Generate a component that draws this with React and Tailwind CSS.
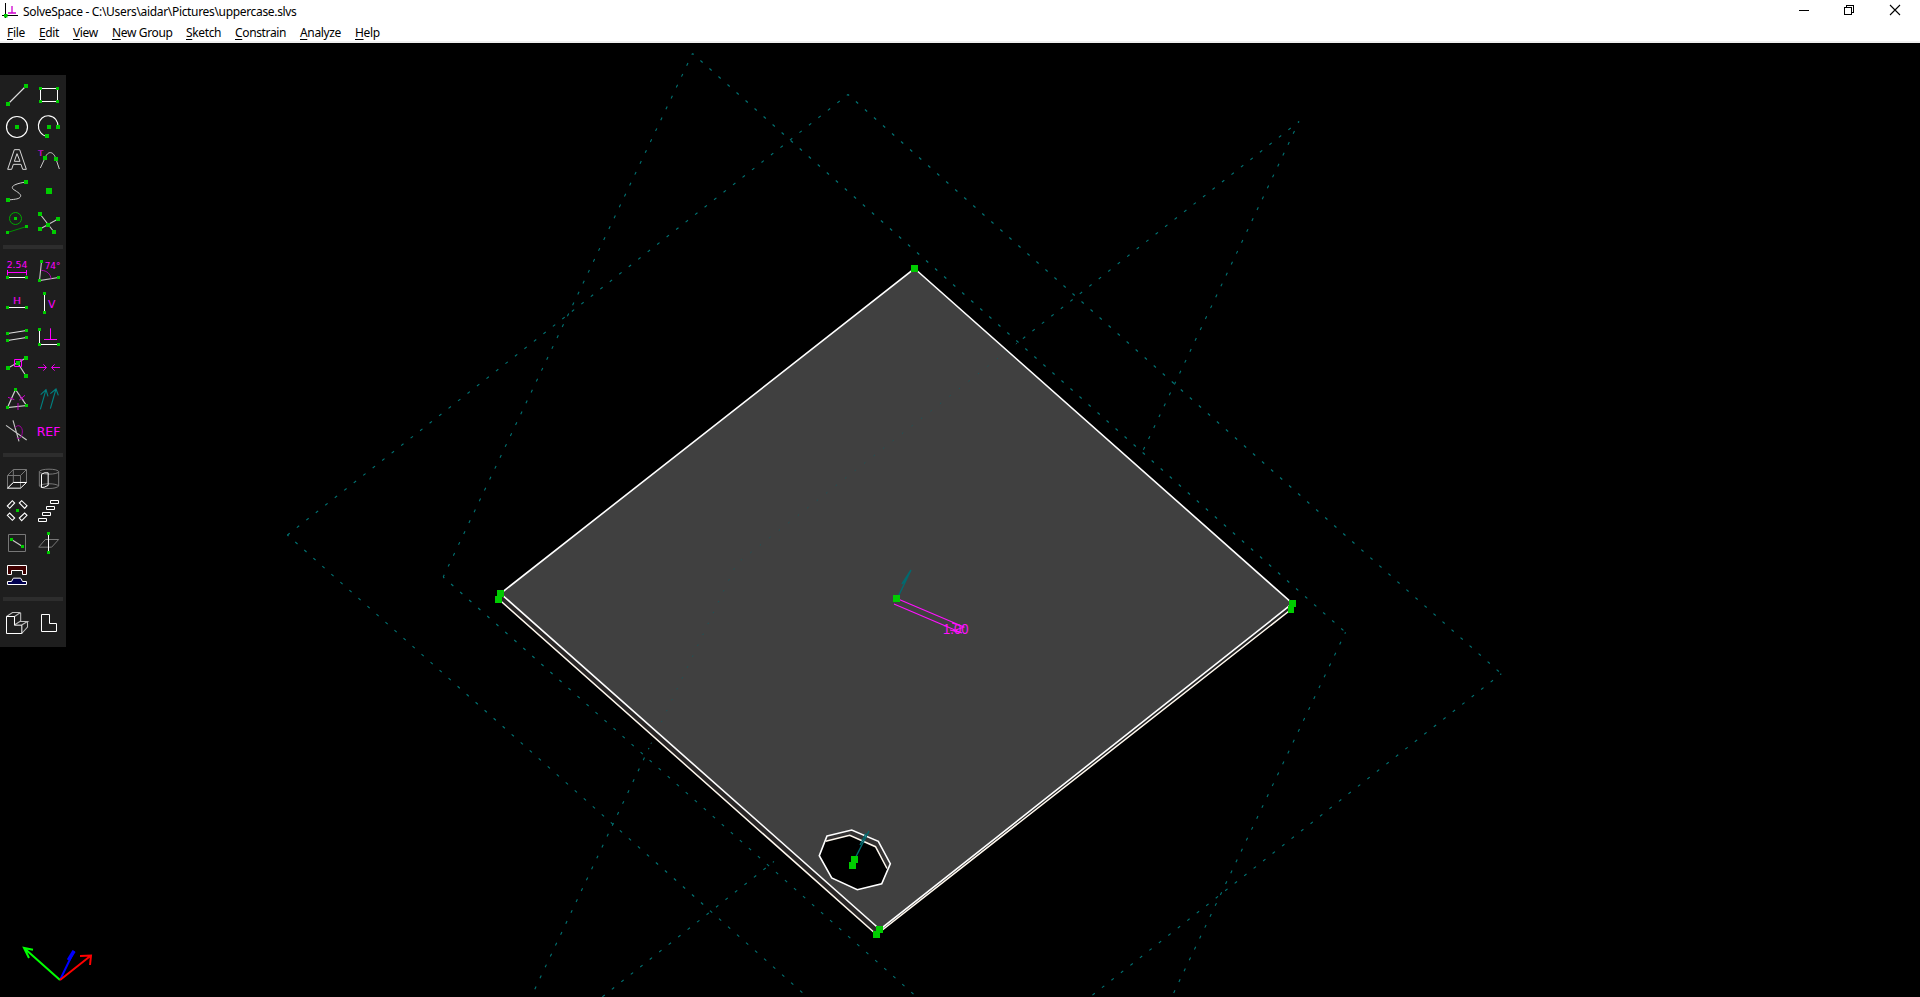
import React from "react";

const G = "#00cc00";
const M = "#ff00ff";
const W = "#ffffff";

// Square handle used for points, centred on (x, y)
function Dot({ x, y, s = 9, c = G }) {
  return <rect x={x - s / 2} y={y - s / 2} width={s} height={s} fill={c} shapeRendering="crispEdges" />;
}

function Line({ d, c = "#e0e0e0", w = 3.4, fill = "none" }) {
  return <path d={d} stroke={c} strokeWidth={w} fill={fill} />;
}

function Label({ x, y, size, len, children }) {
  return (
    <text x={x} y={y} fontSize={size} textLength={len} lengthAdjust="spacingAndGlyphs" fill={M} fontFamily="'DejaVu Sans', sans-serif">
      {children}
    </text>
  );
}

// Each tool: [viewBox, drawing]; the drawing grid is three units per pixel
const sketchTools = [
  ["3 15 96 96", <><Line d="M24 90L78 36" /><Dot x={24} y={90} s={12} /><Dot x={78} y={36} s={12} /></>],
  ["99 15 96 96", <><Line d="M121.500 43.500H172.500V82.500H121.500Z" c={W} w={3} /><Dot x={121.5} y={43.5} /><Dot x={172.5} y={43.5} /><Dot x={121.5} y={82.5} /><Dot x={172.5} y={82.5} /></>],
  ["3 111 96 96", <><circle cx="51" cy="159" r="31.500" fill="none" stroke="#fff" strokeWidth="3.500" /><Dot x={51} y={159} s={12} /></>],
  ["99 111 96 96", <><Line d="M174 159A29.500 31 0 1 0 141 187" w={3.5} c={W} /><Dot x={147} y={159} s={12} /><Dot x={174} y={159} s={12} /><Dot x={141} y={186} s={12} /></>],
  ["3 207 96 96", <Line c="#d8d8d8" w={3} d="M43 227H59L79 286H68L63 271H40L35 286H23ZM51 239L43 262H60Z" />],
  ["99 207 96 96", <><Line c="#c8c8c8" w={3} d="M121 282L135 252C143 230 160 230 168 255L178 285" /><Dot x={135} y={252} s={12} /><Dot x={168} y={255} s={12} /><Label x={114} y={246} size={23} len={16}>T</Label></>],
  ["3 303 96 96", <><Line d="M78 324C45 329 30 337 40 346C52 354 68 362 60 370C55 376 40 376 24 378" w={3} c="#d0d0d0" /><Dot x={78} y={324} s={12} /><Dot x={24} y={378} s={12} /></>],
  ["99 303 96 96", <Dot x={147} y={351} s={18} />],
  ["3 399 96 96", <><circle cx="46.500" cy="433.500" r="18" fill="none" stroke="#00aa00" strokeWidth="3" /><Line d="M22.500 475.500L79.500 457.500" c="#009000" w={3} /><Dot x={46.5} y={433.5} /><Dot x={22.5} y={475.5} /><Dot x={79.5} y={457.5} /></>],
  ["99 399 96 96", <><Line d="M120 420L162 474M120 465L174 435" c="#c8c8c8" /><Dot x={120} y={420} s={12} /><Dot x={174} y={435} s={12} /><Dot x={144} y={453} s={12} /><Dot x={120} y={465} s={12} /><Dot x={162} y={474} s={12} /></>],
];

const constrainTools = [
  ["3 45 96 96", <><Label x={20} y={84} size={28} len={62}>2.54</Label><Line d="M22.500 90V106M79.500 90V106M22.500 97.500H79.500" c={M} w={3} /><Line d="M22.500 112.500H79.500" c={W} w={3} /><Dot x={22.5} y={112.5} /><Dot x={79.5} y={112.5} /></>],
  ["99 45 96 96", <><Line d="M124.500 64.500L118.500 121.500L175.500 112.500" c="#c8c8c8" /><Line d="M124 91C141 92 152 102 153 117" c="#b000b0" w={3} /><Label x={134} y={87} size={27} len={47}>74°</Label><Dot x={124.5} y={64.5} /><Dot x={118.5} y={121.5} /><Dot x={175.5} y={112.5} /></>],
  ["3 141 96 96", <><Label x={39} y={192} size={27} len={24}>H</Label><Line d="M22.500 202.500H79.500" c={W} w={3} /><Dot x={22.5} y={202.5} /><Dot x={79.5} y={202.5} /></>],
  ["99 141 96 96", <><Line d="M133.500 160.500V217.500" c={W} w={3} /><Dot x={133.5} y={160.5} /><Dot x={133.5} y={217.5} /><Label x={144} y={203} size={34} len={22}>V</Label></>],
  ["3 237 96 96", <><Line d="M22.500 280.500L79.500 271.500M22.500 301.500L79.500 292.500" /><Dot x={22.5} y={280.5} /><Dot x={79.5} y={271.5} /><Dot x={22.5} y={301.5} /><Dot x={79.5} y={292.5} /></>],
  ["99 237 96 96", <><Line d="M118.500 268.500V313.500H175.500" c={W} w={3} /><Line d="M151.500 265V298.500M132 298.500H171" c={M} w={3} /><Dot x={118.5} y={268.5} /><Dot x={118.5} y={313.5} /><Dot x={175.5} y={313.5} /></>],
  ["3 333 96 96", <><Line d="M24 384L78 354M54 370L78 408" c="#c8c8c8" /><Dot x={24} y={384} s={12} /><Dot x={78} y={354} s={12} /><Dot x={78} y={408} s={12} /><Dot x={54} y={370} s={12} /><path d="M43.500 358.500H64.500V379.500H43.500Z" fill="none" stroke={M} strokeWidth="3" /></>],
  ["99 333 96 96", <Line d="M114 382.500H139M130 373L139.500 382.500L130 392M180 382.500H155M164 373L154.500 382.500L164 392" c="#e800e8" w={3} />],
  ["3 429 96 96", <><Line d="M46.500 448.500L22.500 502.500L79.500 496.500Z" c="#d0d0d0" w={3.6} /><Line d="M24 472L43 479M58 480L75 466M54 489V510M59 467L71 480" c="#c800c8" w={3} /><Dot x={46.5} y={448.5} /><Dot x={22.5} y={502.5} /><Dot x={79.5} y={496.5} /></>],
  ["99 429 96 96", <Line d="M121 508L138 449M122 464L138 449L144 469M151 506L168 447M151 461L168 447L175 466" c="#008080" w={3.4} />],
  ["3 525 96 96", <><Line d="M18 556L80 600M39 541L57 604" c="#c8c8c8" w={3.3} /><Line d="M45 563C55 550 68 560 67 576C66 592 58 599 50 594" c="#a000a0" w={3} /></>],
  ["99 525 96 96", <Label x={110} y={588} size={36} len={71}>REF</Label>],
];

const groupTools = [
  ["3 54 96 96", <><Line d="M22.500 130L40 112H79M40 112V73.500M22.500 91.500L40 73.500H79.500V112M22.500 91.500H61.500L79.500 73.500M22.500 91.500V130M61.500 91.500V130" c="#777777" w={3} /><Line d="M22.500 129.500L40 112.500H79.500L61.500 129.500Z" c={W} w={3} /></>],
  ["99 54 96 96", <><ellipse cx="147" cy="80" rx="29" ry="7.500" fill="none" stroke="#777" strokeWidth="3" /><Line d="M118 80V123C125 133 169 133 176 123V80M118 123C125 114 169 114 176 123" c="#777777" w={3} /><Line d="M124.500 88L133 83.500H144.500V121L133 126.500L124.500 127.500Z" c={W} w={3} /></>],
  ["3 150 96 96", <><g fill="none" stroke="#ffffff" strokeWidth="3.300"><path d="M22 183L37 167L44 174L29 190Z" /><path d="M58 174L65 167L81 182L74 190Z" /><path d="M22 211L29 204L44 219L37 226Z" /><path d="M58 219L74 204L81 211L65 227Z" /></g><Dot x={52.5} y={196.5} /></>],
  ["99 150 96 96", <g fill="none" stroke="#ffffff" strokeWidth="3"><path d="M151.500 166.500h24v9h-24zM139.500 184.500h24v9h-24zM127.500 202.500h24v9h-24zM115.500 220.500h24v9h-24z" /></g>],
  ["3 246 96 96", <><path d="M25.500 268.500h51v51h-51z" fill="none" stroke="#777" strokeWidth="3" /><Line d="M34.500 283.500L67.500 304.500" c="#c8c8c8" w={3.5} /><Dot x={34.5} y={283.5} /><Dot x={67.5} y={304.5} /></>],
  ["99 246 96 96", <><Line d="M136 283.500H176L155 306.500H116Z" c="#777777" w={3} /><Line d="M145.500 265V322" c={W} w={3} /><Dot x={145.5} y={265.5} /><Dot x={145.5} y={322.5} /></>],
  ["3 342 96 96", <><Line d="M22.500 361.500H79.500V388.500H67.500V376.500H34.500V388.500H22.500Z" c={W} w={3} fill="#400000" /><Line d="M22.500 418.500V409.500H34.500L40 399.500H62L67.500 409.500H79.500V418.500Z" c={W} w={3} fill="#000050" /></>],
];

const viewTools = [
  ["3 486 96 96", <><Line d="M43.500 538.500V514.500L61.500 502.500M82.500 529.500V546L65 565.500M65 540L82.500 529.500H62V503M43 540L62 528M19.500 514.500L37.500 502.500H61.500" c="#bdbdbd" w={3.2} /><Line d="M19.500 514.500H43.500V540.500H65.500V565.500H19.500Z" c={W} w={3} /></>],
  ["99 486 96 96", <Line d="M124.500 508.500H148.500V535.500H169.500V559.500H124.500Z" c={W} w={3} />],
];

function ToolGroup({ tools }) {
  return (
    <div className="grid w-16 grid-cols-2">
      {tools.map(([box, art]) => (
        <button key={box} className="block size-8">
          <svg viewBox={box} className="block size-8">{art}</svg>
        </button>
      ))}
    </div>
  );
}

function Separator() {
  return <div className="mt-[6px] mb-[6px] ml-[2px] h-1 w-[60px] bg-[#2d2d2d]" />;
}

function Toolbar() {
  return (
    <div className="absolute top-8 left-0 flex h-[572px] w-[66px] flex-col bg-[#1e1e1e] pt-1 pl-px">
      <ToolGroup tools={sketchTools} />
      <Separator />
      <ToolGroup tools={constrainTools} />
      <Separator />
      <ToolGroup tools={groupTools} />
      <Separator />
      <ToolGroup tools={viewTools} />
    </div>
  );
}

// Outlines of the three reference planes
const planeEdges = [
  "M692.500 53.500L443.200 577", "M692.500 53.500L1345.500 632.300",
  "M443.200 577L1096 1156", "M1345.500 632.300L1096 1156",
  "M848 94.500L287.400 535", "M848 94.500L1501.300 673.700",
  "M287.400 535L940 1115", "M1501.300 673.700L940 1115",
  "M1299 121.500L1017 343.200", "M1299 121.500L1140 457",
  "M649 748L488 1088", "M774 861.500L488 1087",
];

const HOLE = "M827 836L851.700 830L878.300 841.300L890.300 863.700L881.700 883.700L857.300 889.700L831.700 878L819.300 855.700Z";

function Viewport() {
  return (
    <svg viewBox="0 43 1920 954" className="block h-full w-full">
      <path d="M500.500 593.500L880 929.500L876.500 934L498.500 599Z" fill="#2a2727" />
      <path d="M1292.500 603.500L880 929.500L876.500 934L1291 609.500Z" fill="#232323" />
      <path d="M914.500 268.500L1292.500 603.500L880 929.500L500.500 593.500Z" fill="#404040" />
      <path d={HOLE} fill="#000" />
      <path d="M827 836L851.700 830L878.300 841.300L890.300 863.700L887 868.500L875.500 846.700L849.700 835.300L825.700 841.300Z" fill="#343232" />
      <g fill="none" stroke="#007474" strokeWidth="1.100" strokeDasharray="3 9.060" strokeDashoffset="1.500">
        {planeEdges.map((d) => <path key={d} d={d} />)}
      </g>
      <path d="M1017 343.200L736.600 563.700L649 748" fill="none" stroke="#1c5458" strokeWidth="1" strokeDasharray="1.500 10.560" />
      <g fill="none" stroke="#fff8ee" strokeWidth="1.500">
        <path d="M498.500 599L876.500 934.500L1291 609.500" />
        <path d="M825.700 841.300L849.700 835.300L875.500 846.700L887 868.500" />
      </g>
      <g fill="none" stroke="#ffffff" strokeWidth="1.600">
        <path d="M914.500 268.500L1292.500 603.500L880 929.500L500.500 593.500Z" />
        <path d={HOLE} />
      </g>
      <g fill="none" stroke="#006a70" strokeWidth="1.400">
        <path d="M898 597L911 570M902 584L911 570M903 583L907 577" />
        <path d="M855.500 857.500L869 831M860 845L866 833.500" />
      </g>
      <g fill="none" stroke="#ff10ff" strokeWidth="1.100">
        <path d="M898 599L964 627M894 604L962 633M952 623L964 627L953 631M950 630L962 633" />
      </g>
      <text x="943" y="634" textLength="25.500" lengthAdjust="spacingAndGlyphs" fill="#ff10ff" fontFamily="'Liberation Sans', sans-serif" fontSize="15">1.00</text>
      <g fill={G} shapeRendering="crispEdges">
        <rect x="911" y="265" width="7" height="7" />
        <rect x="497" y="590" width="7" height="7" />
        <rect x="495" y="596" width="7" height="7" />
        <rect x="1289" y="600" width="7" height="7" />
        <rect x="1288" y="606" width="6" height="7" />
        <rect x="876" y="926" width="7" height="7" />
        <rect x="873" y="931" width="7" height="7" />
        <rect x="893" y="595" width="7" height="7" />
        <rect x="851" y="856" width="7" height="7" />
        <rect x="849" y="862" width="7" height="7" />
      </g>
      <g fill="none" strokeWidth="2">
        <path stroke="#0000ff" d="M60 980L74 951M68 960L74.500 951.500" />
        <path stroke="#0000ff" strokeWidth="3.500" d="M68.500 960L74 951" />
        <path stroke="#00ff00" d="M60 980L24 948M33 949.800L24 948L29 958" />
        <path stroke="#ff0000" d="M60 980L91 955.500M80 956L91 955.500L90 965" />
      </g>
    </svg>
  );
}

const menus = [
  ["File", "w-[18px]"], ["Edit", "w-[20px]"], ["View", "w-[25px]"], ["New Group", "w-[60px]"],
  ["Sketch", "w-[35px]"], ["Constrain", "w-[51px]"], ["Analyze", "w-[41px]"], ["Help", "w-[25px]"],
];

function TitleBar() {
  return (
    <div className="flex h-6 items-start justify-between">
      <div className="flex items-start">
        <svg width="18" height="18" viewBox="0 0 18 18" className="mt-[2px] ml-[2px] block" fill="none">
          <path d="M3.500 1V16M0 13.500H16" stroke="#000" />
          <path d="M10 4V11M6 11H14" stroke="#d000d0" strokeWidth="1.300" />
          <rect x="2" y="12" width="3.500" height="3.500" fill={G} />
        </svg>
        <span className="mt-[3px] ml-[3px] text-[12px] leading-[18px] tracking-[-0.33px] whitespace-nowrap">SolveSpace - C:\Users\aidar\Pictures\uppercase.slvs</span>
      </div>
      <svg width="121" height="24" viewBox="1799 0 121 24" fill="none" stroke="#000" className="block">
        <path d="M1799 10.500H1809M1844.500 7.500H1851.500V14.500H1844.500ZM1846.500 7V5.500H1853.500V12.500H1852" shapeRendering="crispEdges" />
        <path d="M1890 5L1900 15M1900 5L1890 15" strokeWidth="1.100" />
      </svg>
    </div>
  );
}

function MenuBar() {
  return (
    <div className="flex h-[19px] gap-[14px] border-b-2 border-[#f0f0f0] pl-[7px] text-[12px] leading-[18px]">
      {menus.map(([m, w]) => (
        <span key={m} className={`${w} tracking-[-0.35px] whitespace-nowrap`}>
          <span className="underline underline-offset-2">{m[0]}</span>{m.slice(1)}
        </span>
      ))}
    </div>
  );
}

export default function App() {
  return (
    <div className="flex h-[997px] w-[1920px] flex-col overflow-hidden bg-white font-['Noto_Sans','Open_Sans',sans-serif] text-black">
      <TitleBar />
      <MenuBar />
      <div className="relative min-h-0 flex-1 overflow-hidden bg-black">
        <Viewport />
        <Toolbar />
      </div>
    </div>
  );
}
